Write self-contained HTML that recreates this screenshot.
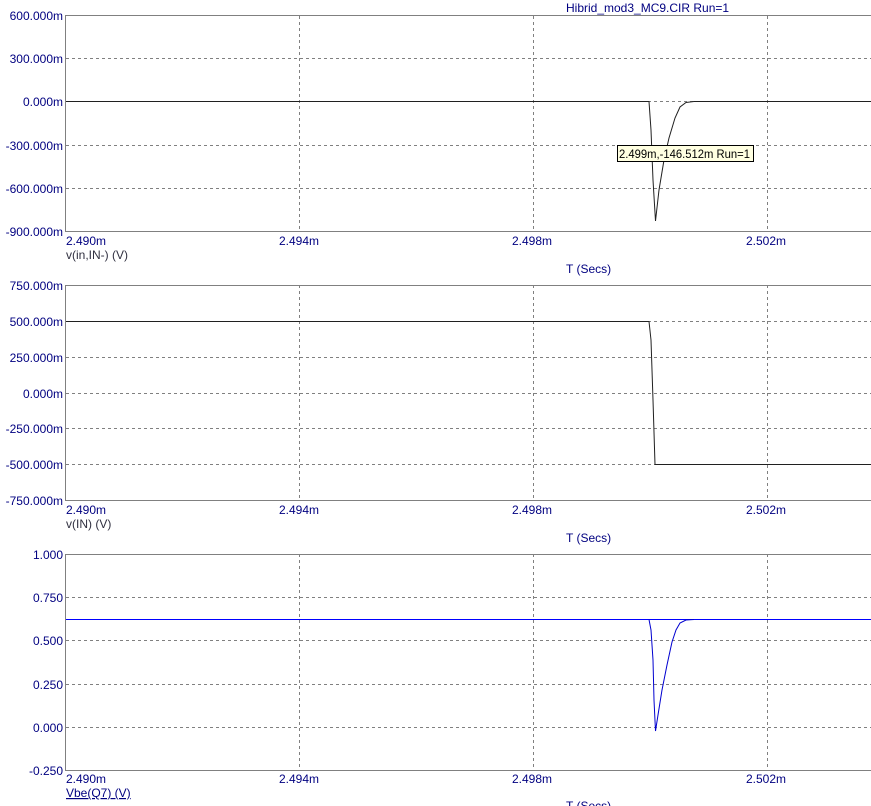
<!DOCTYPE html>
<html><head><style>
html,body{margin:0;padding:0;background:#fff;width:871px;height:806px;overflow:hidden}
svg text{font-family:"Liberation Sans",Arial,sans-serif;font-size:12px;fill:#000080}
</style></head><body>
<svg width="871" height="806" xmlns="http://www.w3.org/2000/svg">
<g stroke="#808080" stroke-width="1" stroke-dasharray="3,3" fill="none">
<path d="M66 58.5H871M66 101.5H871M66 145.5H871M66 188.5H871"/>
<path d="M299.5 16V231M533.5 16V231M767.5 16V231"/>
<path d="M66 321.5H871M66 357.5H871M66 393.5H871M66 428.5H871M66 464.5H871"/>
<path d="M299.5 285V500M533.5 285V500M767.5 285V500"/>
<path d="M66 597.5H871M66 640.5H871M66 684.5H871M66 727.5H871"/>
<path d="M299.5 554V770M533.5 554V770M767.5 554V770"/>
</g>
<g stroke="#808080" stroke-width="1" fill="none">
<path d="M871 15.5H65.5V231.5H871"/>
<path d="M871 285.5H65.5V500.5H871"/>
<path d="M871 554.5H65.5V770.5H871"/>
</g>
<path d="M66 101.5H649L651 130L653 180L655.5 221L659 190L664 160L669 138L675 118L680 107L686 102.5L694 101.5H871" stroke="#202020" fill="none"/>
<path d="M66 321.5H649L651 340L653 400L655 464.5H871" stroke="#202020" fill="none"/>
<rect x="66" y="619" width="805" height="1" fill="#0000ff"/>
<path d="M649 619.5L651 630L653 660L654 700L655.5 731L658 715L662 690L667 665L672 642L676 630L680 623L686 620L694 619.5" stroke="#0000d0" fill="none"/>
<g text-anchor="end">
<text x="63" y="20">600.000m</text>
<text x="63" y="63">300.000m</text>
<text x="63" y="106">0.000m</text>
<text x="63" y="150">-300.000m</text>
<text x="63" y="193">-600.000m</text>
<text x="63" y="236">-900.000m</text>
<text x="63" y="290">750.000m</text>
<text x="63" y="326">500.000m</text>
<text x="63" y="362">250.000m</text>
<text x="63" y="398">0.000m</text>
<text x="63" y="433">-250.000m</text>
<text x="63" y="469">-500.000m</text>
<text x="63" y="505">-750.000m</text>
<text x="63" y="559">1.000</text>
<text x="63" y="602">0.750</text>
<text x="63" y="645">0.500</text>
<text x="63" y="689">0.250</text>
<text x="63" y="732">0.000</text>
<text x="63" y="775">-0.250</text>
</g>
<text x="66" y="245">2.490m</text><text x="279" y="245">2.494m</text><text x="512" y="245">2.498m</text><text x="746" y="245">2.502m</text>
<text x="66" y="514">2.490m</text><text x="279" y="514">2.494m</text><text x="512" y="514">2.498m</text><text x="746" y="514">2.502m</text>
<text x="66" y="783">2.490m</text><text x="279" y="783">2.494m</text><text x="512" y="783">2.498m</text><text x="746" y="783">2.502m</text>
<text x="66" y="259" style="fill:#303040">v(in,IN-) (V)</text>
<text x="66" y="528" style="fill:#303040">v(IN) (V)</text>
<text x="66" y="797" text-decoration="underline">Vbe(Q7) (V)</text>
<text x="566" y="273">T (Secs)</text>
<text x="566" y="542">T (Secs)</text>
<text x="566" y="810">T (Secs)</text>
<text x="566" y="12">Hibrid_mod3_MC9.CIR Run=1</text>
<rect x="617.5" y="145.5" width="136" height="16" fill="#ffffe1" stroke="#000"/>
<text x="619" y="158" textLength="131" lengthAdjust="spacingAndGlyphs" style="fill:#000">2.499m,-146.512m Run=1</text>
</svg>
</body></html>
